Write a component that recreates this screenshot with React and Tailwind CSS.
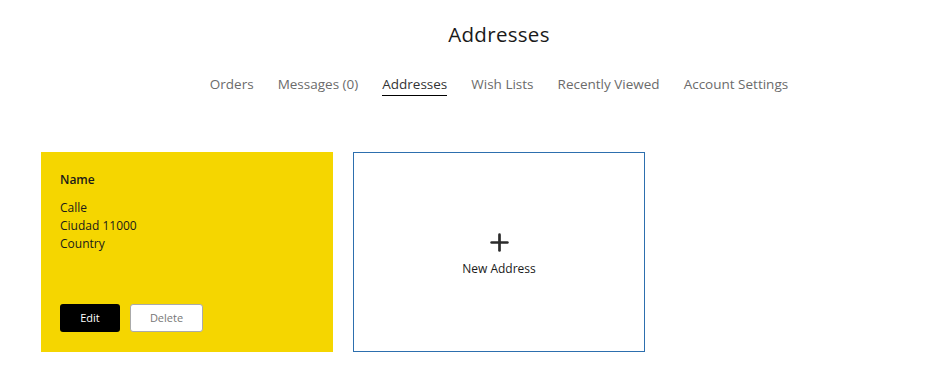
import { Plus } from "lucide-react";

const tabs = ["Orders", "Messages (0)", "Addresses", "Wish Lists", "Recently Viewed", "Account Settings"];

const App = () => {
  return (
    <div className="w-[941px] h-[375px] bg-white font-['Open_Sans',sans-serif] text-[#1a1a1a]">
      <div className="pl-[57px]">
        <h1 className="pt-[20px] text-center text-[20.5px] leading-[28px] font-medium tracking-[0.3px]">Addresses</h1>

        <nav className="mt-[27px] flex justify-center gap-[24px] text-[13.5px] leading-[18px] text-[#6b6b6b]">
          {tabs.map((t) => (
            <span
              key={t}
              className={t === "Addresses" ? "text-[#333] border-b border-black pb-[2px]" : "pb-[3px]"}
            >
              {t}
            </span>
          ))}
        </nav>
      </div>

      {/* Cards */}
      <div className="mt-[56px] pl-[41px] flex gap-[20px]">
        <div className="w-[292px] h-[200px] bg-[#f5d600] px-[19px] pt-[20px] pb-[20px] flex flex-col">
          <p className="text-[12px] leading-[16px] font-semibold">Name</p>
          <div className="mt-[11px] text-[12px] leading-[18px]">
            <p>Calle</p>
            <p>Ciudad 11000</p>
            <p>Country</p>
          </div>
          <div className="mt-auto flex gap-[10px]">
            <button className="w-[60px] h-[28px] bg-black text-white text-[11px] rounded-[3px]">Edit</button>
            <button className="w-[73px] h-[28px] bg-white text-[#777] text-[11px] rounded-[3px] border border-[#aaa]">
              Delete
            </button>
          </div>
        </div>

        <div className="w-[292px] h-[200px] border border-[#2d6fae] flex flex-col items-center justify-center">
          <Plus size={27} strokeWidth={2.4} className="text-[#2b2b2b] mt-[2px]" />
          <p className="mt-[5px] text-[12px] leading-[16px]">New Address</p>
        </div>
      </div>
    </div>
  );
};

export default App;
